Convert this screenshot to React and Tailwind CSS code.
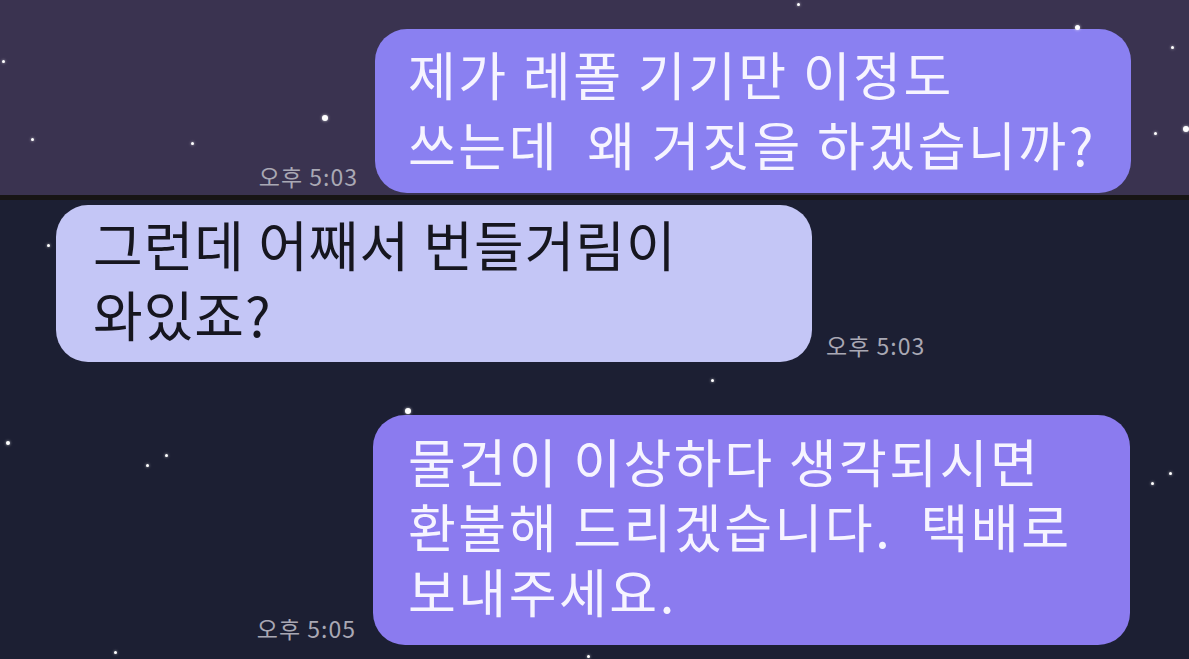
import React from "react";

/**
 * Chat capture - three message bubbles on a starry night background
 */
const FONT = '"Noto Sans CJK KR", "Noto Sans", sans-serif';

// decorative stars: [x, y, size]
const STARS = [
  [3, 61, 3],
  [32, 139, 3],
  [192, 143, 3],
  [325, 118, 6],
  [798, 4, 3],
  [1077, 27, 5],
  [1172, 47, 3],
  [1155, 133, 3],
  [1186, 129, 6],
  [48, 245, 3],
  [8, 443, 4],
  [166, 455, 3],
  [147, 465, 3],
  [115, 652, 3],
  [408, 411, 6],
  [712, 380, 3],
  [1152, 483, 3],
  [1170, 473, 3],
  [588, 656, 3],
];

function Time({ children }) {
  return (
    <span
      className="mb-[4px] shrink-0 whitespace-nowrap text-[23px] leading-[26px] tracking-[1px] text-[#a9a8b4]"
      style={{ fontFamily: FONT }}
    >
      {children}
    </span>
  );
}

export default function App() {
  return (
    <div
      className="relative flex h-[659px] w-[1189px] flex-col overflow-hidden bg-[#1c1f33]"
      style={{ fontFamily: FONT }}
    >
      {/* Top capture */}
      <div className="flex h-[195px] shrink-0 items-end justify-end gap-[17px] bg-[#3a3350] pb-[2px] pr-[58px]">
        <Time>오후 5:03</Time>
        <div className="h-[164px] w-[756px] rounded-[32px] bg-[#8a80f1] pl-[33px] pt-[10px] text-[52px] leading-[70px] tracking-[2.5px] whitespace-pre text-[#f6f4ff]">
          {"제가 레폴 기기만 이정도\n쓰는데  왜 거짓을 하겠습니까?"}
        </div>
      </div>

      {/* Divider between captures */}
      <div className="h-[5px] shrink-0 bg-[#171515]" />

      {/* Lower capture */}
      <div className="flex flex-1 flex-col pt-[5px]">
        <div className="flex items-end gap-[14px] pl-[56px]">
          <div className="h-[157px] w-[756px] rounded-[32px] bg-[#c4c6f6] pl-[37px] pt-[4px] text-[54px] leading-[70px] tracking-[1px] whitespace-pre text-[#16161f]">
            {"그런데 어째서 번들거림이\n와있죠?"}
          </div>
          <Time>오후 5:03</Time>
        </div>

        <div className="mt-[53px] flex items-end justify-end gap-[17px] pr-[59px]">
          <Time>오후 5:05</Time>
          <div className="h-[230px] w-[757px] rounded-[32px] bg-[#8b7bef] pl-[35px] pt-[13px] text-[52px] leading-[65px] tracking-[2.5px] whitespace-pre text-[#f6f4ff]">
            {"물건이 이상하다 생각되시면\n환불해 드리겠습니다.  택배로\n보내주세요."}
          </div>
        </div>
      </div>

      {/* Stars */}
      {STARS.map(([x, y, s], i) => (
        <span
          key={i}
          className="absolute rounded-full bg-white shadow-[0_0_3px_rgba(255,255,255,0.7)]"
          style={{ left: x - s / 2, top: y - s / 2, width: s, height: s }}
        />
      ))}
    </div>
  );
}
